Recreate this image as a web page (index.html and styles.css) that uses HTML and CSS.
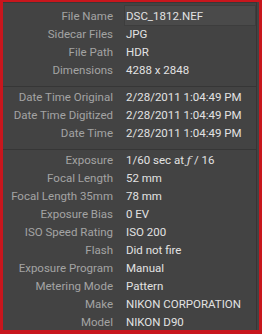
FILE: index.html
```html
<!DOCTYPE html>
<html>
<head>
<meta charset="utf-8">
<link rel="stylesheet" href="styles.css">
</head>
<body>
<div class="frame">
  <div class="panel">
    <section class="group">
      <div class="row"><span class="label">File Name</span><span class="value field">DSC_1812.NEF</span></div>
      <div class="row"><span class="label">Sidecar Files</span><span class="value">JPG</span></div>
      <div class="row"><span class="label">File Path</span><span class="value">HDR</span></div>
      <div class="row"><span class="label">Dimensions</span><span class="value">4288 x 2848</span></div>
    </section>
    <section class="group">
      <div class="row"><span class="label">Date Time Original</span><span class="value">2/28/2011 1:04:49 PM</span></div>
      <div class="row"><span class="label">Date Time Digitized</span><span class="value">2/28/2011 1:04:49 PM</span></div>
      <div class="row"><span class="label">Date Time</span><span class="value">2/28/2011 1:04:49 PM</span></div>
    </section>
    <section class="group">
      <div class="row"><span class="label">Exposure</span><span class="value">1/60 sec at <i class="f">ƒ</i> / 16</span></div>
      <div class="row"><span class="label">Focal Length</span><span class="value">52 mm</span></div>
      <div class="row"><span class="label">Focal Length 35mm</span><span class="value">78 mm</span></div>
      <div class="row"><span class="label">Exposure Bias</span><span class="value">0 EV</span></div>
      <div class="row"><span class="label">ISO Speed Rating</span><span class="value">ISO 200</span></div>
      <div class="row"><span class="label">Flash</span><span class="value">Did not fire</span></div>
      <div class="row"><span class="label">Exposure Program</span><span class="value">Manual</span></div>
      <div class="row"><span class="label">Metering Mode</span><span class="value">Pattern</span></div>
      <div class="row"><span class="label">Make</span><span class="value">NIKON CORPORATION</span></div>
      <div class="row"><span class="label">Model</span><span class="value">NIKON D90</span></div>
    </section>
  </div>
</div>
</body>
</html>
```
FILE: styles.css
```css
html, body {
  margin: 0;
  padding: 0;
  background: #434343;
}

.frame {
  width: 262px;
  height: 334px;
  box-sizing: border-box;
  border-style: solid;
  border-color: #c8161d;
  border-width: 2px 3px 4px 3px;
  background: #434343;
}

.panel {
  height: 100%;
  box-sizing: border-box;
  border-top: 1px solid #383838;
  border-right: 1px solid #363636;
  margin-right: 2px;
  font-family: Roboto, "Open Sans", sans-serif;
  font-size: 11.5px;
}

.group {
  padding: 4px 0 7px;
}

.group + .group {
  border-top: 1px solid #363636;
  padding-top: 1px;
}

.row {
  display: grid;
  grid-template-columns: 110px 1fr;
  column-gap: 13px;
  height: 18px;
  line-height: 18px;
  white-space: nowrap;
}

.label {
  text-align: right;
  color: #a3a3a3;
}

.value {
  color: #e2e2e2;
}

.field {
  background: #4a4a4a;
  border: 1px solid #3d3d3d;
  margin: -2px 0 -1px -2px;
  padding: 1px 0 0 1px;
  line-height: 18px;
}

.f {
  font-style: italic;
  font-family: "DejaVu Serif", serif;
}
```
